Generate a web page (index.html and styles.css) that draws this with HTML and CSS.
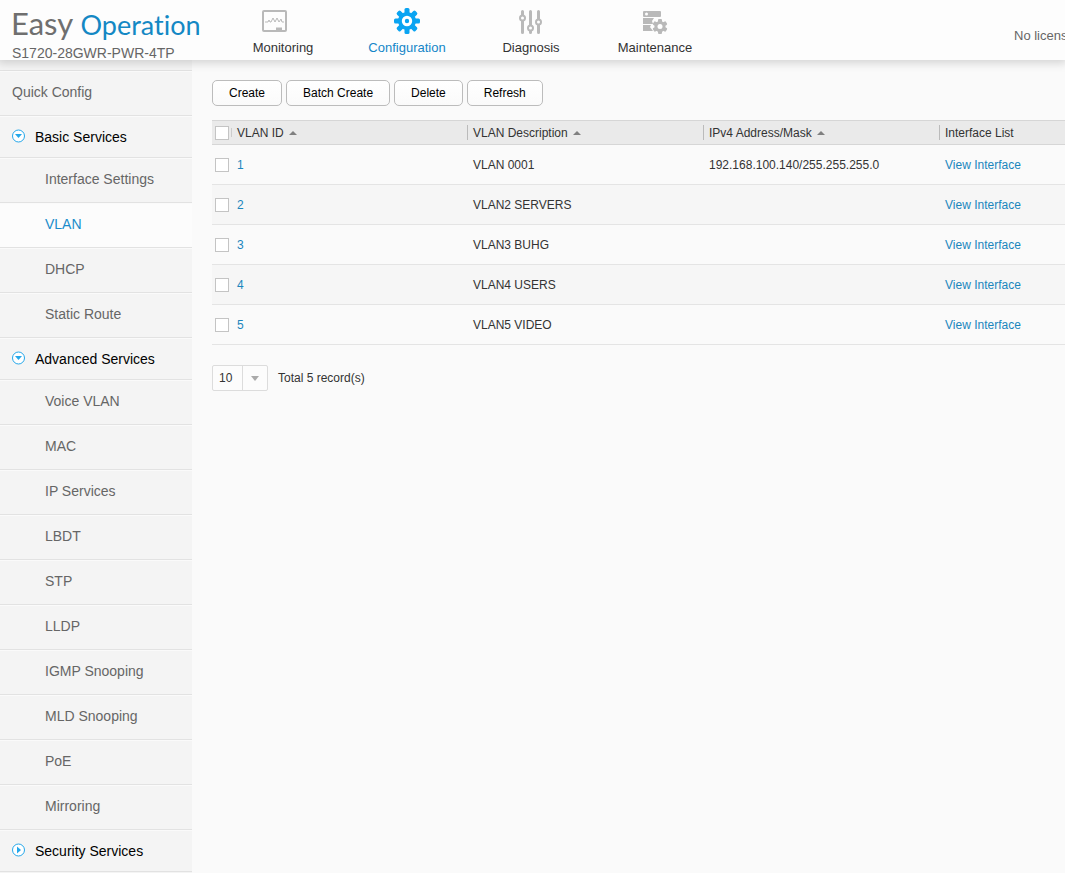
FILE: index.html
```
<!DOCTYPE html>
<html lang="en">
<head>
  <meta charset="UTF-8">
  <meta name="viewport" content="width=device-width, initial-scale=1.0">
  <title>Easy Operation - VLAN</title>
  <link rel="stylesheet" href="styles.css">
</head>
<body>
  <header class="header">
    <div class="brand">
      <div class="logo">Easy <span class="logo-blue">Operation</span></div>
      <div class="model">S1720-28GWR-PWR-4TP</div>
    </div>
    <nav class="main-nav">
      <a href="#" class="nav-item">
        <svg class="nav-icon" viewBox="0 0 44 28" fill="none" stroke="#b9b9b9">
          <rect x="2" y="4" width="23" height="20" rx="1" stroke-width="2"/>
          <path d="M4 15h3l1-2 1 2h1l2-4 2 4 2-4 2 4 2-3 1 3h2" stroke-width="1"/>
          <path d="M15 22h6" stroke-width="3"/>
        </svg>
        <span>Monitoring</span>
      </a>
      <a href="#" class="nav-item active">
        <svg class="nav-icon" viewBox="0 0 44 28">
          <g fill="#0aa4f2">
            <rect x="19.500" y="1" width="5" height="26" rx="1.500"/>
            <rect x="19.500" y="1" width="5" height="26" rx="1.500" transform="rotate(45 22 14)"/>
            <rect x="19.500" y="1" width="5" height="26" rx="1.500" transform="rotate(90 22 14)"/>
            <rect x="19.500" y="1" width="5" height="26" rx="1.500" transform="rotate(135 22 14)"/>
            <circle cx="22" cy="14" r="9"/>
          </g>
          <circle cx="22" cy="14" r="3.700" fill="#0aa4f2" stroke="#fff" stroke-width="3"/>
        </svg>
        <span>Configuration</span>
      </a>
      <a href="#" class="nav-item">
        <svg class="nav-icon" viewBox="0 0 44 28" fill="none" stroke="#b9b9b9">
          <path d="M13.500 4.500v21M21.500 4.500v21M29.500 4.500v21" stroke-width="3" stroke-linecap="round"/>
          <g fill="#fff" stroke-width="2">
            <circle cx="13.500" cy="11" r="2.500"/>
            <circle cx="21.500" cy="21" r="2.500"/>
            <circle cx="29.500" cy="15" r="2.500"/>
          </g>
        </svg>
        <span>Diagnosis</span>
      </a>
      <a href="#" class="nav-item">
        <svg class="nav-icon" viewBox="0 0 44 28">
          <g fill="#b9b9b9">
            <rect x="10" y="4" width="18" height="6" rx="1"/>
            <path d="M10 11h11l-2 3 1 3h-10z"/>
            <path d="M10 18h8l-1 2 3 4h-10z"/>
          </g>
          <circle cx="13.500" cy="7" r="1.500" fill="#fff"/>
          <g fill="#b9b9b9">
            <rect x="25" y="12" width="4" height="15" rx="1"/>
            <rect x="25" y="12" width="4" height="15" rx="1" transform="rotate(60 27 19.500)"/>
            <rect x="25" y="12" width="4" height="15" rx="1" transform="rotate(120 27 19.500)"/>
            <circle cx="27" cy="19.500" r="5.500"/>
          </g>
          <circle cx="27" cy="19.500" r="2.500" fill="#fff"/>
        </svg>
        <span>Maintenance</span>
      </a>
    </nav>
    <div class="license">No license</div>
  </header>

  <div class="page">
    <aside class="sidebar">
      <a href="#" class="side-item top">Quick Config</a>

      <button class="side-group" type="button">
        <svg class="side-icon" viewBox="0 0 14 14"><circle cx="6.500" cy="7" r="6" fill="#fff" stroke="#24a7ea"/><path d="M3 5h7l-3.500 4z" fill="#24a7ea"/></svg>
        Basic Services
      </button>
      <a href="#" class="side-item">Interface Settings</a>
      <a href="#" class="side-item active">VLAN</a>
      <a href="#" class="side-item">DHCP</a>
      <a href="#" class="side-item">Static Route</a>

      <button class="side-group" type="button">
        <svg class="side-icon" viewBox="0 0 14 14"><circle cx="6.500" cy="7" r="6" fill="#fff" stroke="#24a7ea"/><path d="M3 5h7l-3.500 4z" fill="#24a7ea"/></svg>
        Advanced Services
      </button>
      <a href="#" class="side-item">Voice VLAN</a>
      <a href="#" class="side-item">MAC</a>
      <a href="#" class="side-item">IP Services</a>
      <a href="#" class="side-item">LBDT</a>
      <a href="#" class="side-item">STP</a>
      <a href="#" class="side-item">LLDP</a>
      <a href="#" class="side-item">IGMP Snooping</a>
      <a href="#" class="side-item">MLD Snooping</a>
      <a href="#" class="side-item">PoE</a>
      <a href="#" class="side-item">Mirroring</a>

      <button class="side-group last" type="button">
        <svg class="side-icon" viewBox="0 0 14 14"><circle cx="6.500" cy="7" r="6" fill="#fff" stroke="#24a7ea"/><path d="M5 3.500v7l4-3.500z" fill="#24a7ea"/></svg>
        Security Services
      </button>
    </aside>

    <main class="content">
      <div class="toolbar">
        <button class="btn" type="button">Create</button>
        <button class="btn" type="button">Batch Create</button>
        <button class="btn" type="button">Delete</button>
        <button class="btn" type="button">Refresh</button>
      </div>

      <table class="grid">
        <colgroup>
          <col class="col-check">
          <col class="col-data">
          <col class="col-data">
          <col class="col-data">
          <col>
        </colgroup>
        <thead>
          <tr>
            <th class="check"><input type="checkbox" aria-label="Select all"></th>
            <th><span class="head first">VLAN ID<i class="sort"></i></span></th>
            <th><span class="head">VLAN Description<i class="sort"></i></span></th>
            <th><span class="head">IPv4 Address/Mask<i class="sort"></i></span></th>
            <th><span class="head">Interface List</span></th>
          </tr>
        </thead>
        <tbody>
          <tr>
            <td class="check"><input type="checkbox" aria-label="Select VLAN 1"></td>
            <td><a href="#">1</a></td>
            <td>VLAN 0001</td>
            <td>192.168.100.140/255.255.255.0</td>
            <td><a href="#">View Interface</a></td>
          </tr>
          <tr>
            <td class="check"><input type="checkbox" aria-label="Select VLAN 2"></td>
            <td><a href="#">2</a></td>
            <td>VLAN2 SERVERS</td>
            <td></td>
            <td><a href="#">View Interface</a></td>
          </tr>
          <tr>
            <td class="check"><input type="checkbox" aria-label="Select VLAN 3"></td>
            <td><a href="#">3</a></td>
            <td>VLAN3 BUHG</td>
            <td></td>
            <td><a href="#">View Interface</a></td>
          </tr>
          <tr>
            <td class="check"><input type="checkbox" aria-label="Select VLAN 4"></td>
            <td><a href="#">4</a></td>
            <td>VLAN4 USERS</td>
            <td></td>
            <td><a href="#">View Interface</a></td>
          </tr>
          <tr>
            <td class="check"><input type="checkbox" aria-label="Select VLAN 5"></td>
            <td><a href="#">5</a></td>
            <td>VLAN5 VIDEO</td>
            <td></td>
            <td><a href="#">View Interface</a></td>
          </tr>
        </tbody>
      </table>

      <div class="pager">
        <div class="page-size">
          <select aria-label="Records per page">
            <option>10</option>
            <option>20</option>
            <option>50</option>
          </select>
        </div>
        <span>Total 5 record(s)</span>
      </div>
    </main>
  </div>
</body>
</html>
```

FILE: styles.css
```
* {
  box-sizing: border-box;
}

body {
  margin: 0;
  min-height: 100vh;
  display: flex;
  flex-direction: column;
  font-family: "Liberation Sans", Arial, sans-serif;
  font-size: 12px;
  color: #333;
  background-color: #fafafa;
  overflow-x: hidden;
}

a {
  color: #1b86bd;
  text-decoration: none;
}

button, select {
  font-family: inherit;
}

/* Header */
.header {
  display: flex;
  height: 60px;
  background-color: #fdfdfd;
  box-shadow: 0 1px 9px 2px rgba(0, 0, 0, 0.16);
  position: relative;
  z-index: 1;
}

.brand {
  width: 221px;
  flex-shrink: 0;
  padding: 5px 0 0 12px;
}

.logo {
  font-family: Lato, sans-serif;
  font-size: 31px;
  font-variant-ligatures: none;
  line-height: 36px;
  margin-left: -1px;
  color: #6f6f6f;
  white-space: nowrap;
}

.logo-blue {
  font-size: 27px;
  color: #1488c4;
}

.model {
  font-size: 14px;
  line-height: 20px;
  color: #666;
}

.main-nav {
  display: flex;
}

.nav-item {
  width: 124px;
  padding-top: 7px;
  display: flex;
  flex-direction: column;
  align-items: center;
  font-size: 13px;
  line-height: 18px;
  color: #333;
}

.nav-item.active {
  color: #1486c8;
}

.nav-icon {
  width: 44px;
  height: 28px;
  margin-bottom: 4px;
}

.license {
  flex: 1;
  min-width: 0;
  padding-left: 297px;
  font-size: 13px;
  line-height: 72px;
  color: #666;
  white-space: nowrap;
  overflow: hidden;
}

/* Layout */
.page {
  display: flex;
  flex: 1;
}

.sidebar {
  width: 192px;
  flex-shrink: 0;
  padding-top: 10px;
  background-color: #f4f4f4;
}

.content {
  flex: 1;
  min-width: 0;
  padding: 20px 0 20px 20px;
}

/* Sidebar */
.side-item, .side-group {
  display: flex;
  align-items: center;
  width: 100%;
  border: none;
  border-top: 1px solid #e2e2e2;
  box-shadow: inset 0 1px 0 #fafafa;
  font-size: 14px;
}

.side-item {
  height: 45px;
  padding: 0 0 2px 45px;
  color: #666;
}

.side-item.top {
  padding-left: 12px;
}

.side-item.active {
  background-color: #fcfcfc;
  color: #1a8ccb;
}

.side-group {
  height: 42px;
  padding: 0 0 0 12px;
  background: none;
  color: #000;
  cursor: pointer;
}

.side-group.last {
  height: 43px;
  border-bottom: 1px solid #e2e2e2;
}

.side-icon {
  width: 14px;
  height: 14px;
  margin: 0 9px 2px 0;
}

/* Toolbar */
.toolbar {
  display: flex;
  gap: 4px;
  margin-bottom: 14px;
}

.btn {
  height: 26px;
  padding: 0 16px;
  border: 1px solid #bcbcbc;
  border-radius: 5px;
  background: linear-gradient(#fff, #fafafa);
  font-size: 12px;
  color: #000;
  cursor: pointer;
}

/* Table */
.grid {
  width: 100%;
  table-layout: fixed;
  border-collapse: separate;
  border-spacing: 0;
}

.col-check {
  width: 19px;
}

.col-data {
  width: 236px;
}

.grid th {
  height: 25px;
  padding: 0;
  border-top: 1px solid #d6d6d6;
  border-bottom: 1px solid #d6d6d6;
  background-color: #eaeaea;
  font-weight: normal;
  text-align: left;
}

.grid td {
  height: 40px;
  padding: 0 0 0 6px;
  border-bottom: 1px solid #e4e4e4;
}

.grid tbody tr:nth-child(even) {
  background-color: #f6f6f6;
}

.grid .check {
  padding: 0 0 0 3px;
}

.head {
  display: flex;
  align-items: center;
  height: 15px;
  padding-left: 5px;
  border-left: 1px solid #bbb;
}

.head.first {
  height: 9px;
  border-left-color: #ccc;
}

.sort {
  margin-left: 5px;
  border: 4px solid transparent;
  border-top: none;
  border-bottom-color: #808080;
}

input[type="checkbox"] {
  appearance: none;
  display: block;
  width: 14px;
  height: 14px;
  margin: 0;
  border: 1px solid #c4c4c4;
  background-color: #fff;
}

/* Pager */
.pager {
  display: flex;
  align-items: center;
  gap: 10px;
  margin-top: 20px;
}

.page-size {
  position: relative;
}

.page-size select {
  appearance: none;
  display: block;
  width: 56px;
  height: 26px;
  padding: 0 0 0 6px;
  border: 1px solid #dcdcdc;
  border-radius: 2px;
  background: linear-gradient(#dcdcdc, #dcdcdc) 29px 0 / 1px 100% no-repeat #fcfcfc;
  font-size: 12px;
  color: #333;
}

.page-size::after {
  content: "";
  position: absolute;
  top: 11px;
  right: 9px;
  border: 4px solid transparent;
  border-top: 5px solid #aaa;
  border-bottom: none;
  pointer-events: none;
}
```
